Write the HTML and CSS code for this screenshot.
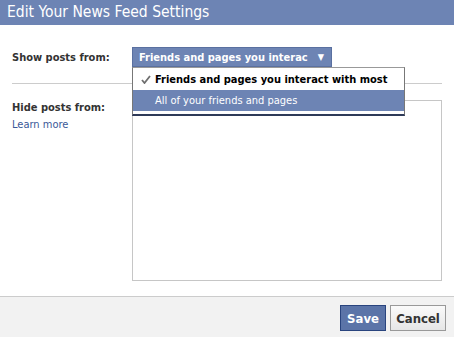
FILE: index.html
```html
<!DOCTYPE html>
<html lang="en">
<head>
  <meta charset="UTF-8">
  <title>Edit Your News Feed Settings</title>
  <link rel="stylesheet" href="styles.css">
</head>
<body>
  <div class="dialog">
    <div class="dialog-title">Edit Your News Feed Settings</div>
    <div class="dialog-body">
      <div class="row row-show">
        <div class="label">Show posts from:</div>
        <div class="select-wrap">
          <div class="select-button">
            <span class="select-text">Friends and pages you interac</span>
            <span class="select-arrow">&#9660;</span>
          </div>
          <ul class="menu">
            <li class="menu-item checked">
              <svg class="check" width="10" height="9" viewBox="0 0 10 9"><polyline points="1,5 3.5,8 9,1" fill="none" stroke="#6f6f6f" stroke-width="1.8"/></svg>
              <span>Friends and pages you interact with most</span>
            </li>
            <li class="menu-item active">All of your friends and pages</li>
          </ul>
        </div>
      </div>
      <div class="divider"></div>
      <div class="row row-hide">
        <div class="label-col">
          <div class="label">Hide posts from:</div>
          <a class="learn" href="#">Learn more</a>
        </div>
        <div class="hide-box"></div>
      </div>
    </div>
    <div class="dialog-footer">
      <button class="btn btn-save">Save</button>
      <button class="btn btn-cancel">Cancel</button>
    </div>
  </div>
</body>
</html>
```

FILE: styles.css
```css
body {
  margin: 0;
  font-family: "DejaVu Sans Condensed", "Liberation Sans", sans-serif;
  font-size: 11px;
  color: #333;
  background: white;
}

.dialog {
  width: 454px;
  height: 337px;
  display: flex;
  flex-direction: column;
}

.dialog-title {
  height: 25px;
  line-height: 25px;
  background-color: #6d84b4;
  color: white;
  font-size: 15.5px;
  padding-left: 7px;
}

.dialog-body {
  flex: 1;
  padding: 22px 12px 0 12px;
}

.row {
  display: flex;
}

.row-show {
  align-items: center;
}

.label {
  width: 120px;
  font-weight: bold;
  color: #333;
}

.select-wrap {
  position: relative;
}

.select-button {
  width: 186px;
  height: 18px;
  padding: 0 6px;
  background-color: #6d84b4;
  border: 1px solid #5a70a0;
  color: white;
  font-weight: bold;
  display: flex;
  align-items: center;
  justify-content: space-between;
}

.select-text {
  white-space: nowrap;
}

.select-arrow {
  font-size: 9px;
  margin-right: 1px;
}

.menu {
  position: absolute;
  top: 20px;
  left: 0;
  width: 271px;
  margin: 0;
  padding: 0 0 3px 0;
  list-style: none;
  background: white;
  border: 1px solid #777;
  border-top: 1px solid #999;
  border-bottom: 2px solid #2e3a58;
  z-index: 2;
}

.menu-item {
  padding-left: 22px;
  white-space: nowrap;
  display: flex;
  align-items: center;
}

.menu-item.checked {
  height: 22px;
  padding-left: 8px;
  color: black;
  font-weight: bold;
}

.menu-item.active {
  height: 21px;
  background-color: #6d84b4;
  color: white;
}

.check {
  margin-right: 4px;
}

.divider {
  height: 1px;
  background-color: #ccc;
  margin: 16px 0;
}

.row-hide {
  align-items: flex-start;
}

.label-col {
  width: 120px;
  padding-top: 1px;
}

.label-col .label {
  margin-bottom: 4px;
}

.learn {
  color: #3b5998;
  text-decoration: none;
}

.hide-box {
  width: 308px;
  height: 179px;
  border: 1px solid #c6c6c6;
}

.dialog-footer {
  height: 41px;
  border-top: 1px solid #ccc;
  background-color: #f2f2f2;
  display: flex;
  justify-content: flex-end;
  align-items: flex-start;
  gap: 4px;
  padding: 8px 8px 0 0;
  box-sizing: border-box;
}

.btn {
  height: 26px;
  font-family: "DejaVu Sans Condensed", "Liberation Sans", sans-serif;
  font-size: 13px;
  font-weight: bold;
  padding: 0;
  cursor: pointer;
}

.btn-save {
  width: 46px;
  background-color: #5b74a8;
  border: 1px solid #29447e;
  color: white;
}

.btn-cancel {
  width: 56px;
  background: linear-gradient(#fafafa, #e6e6e6);
  border: 1px solid #999;
  color: #333;
}
```
